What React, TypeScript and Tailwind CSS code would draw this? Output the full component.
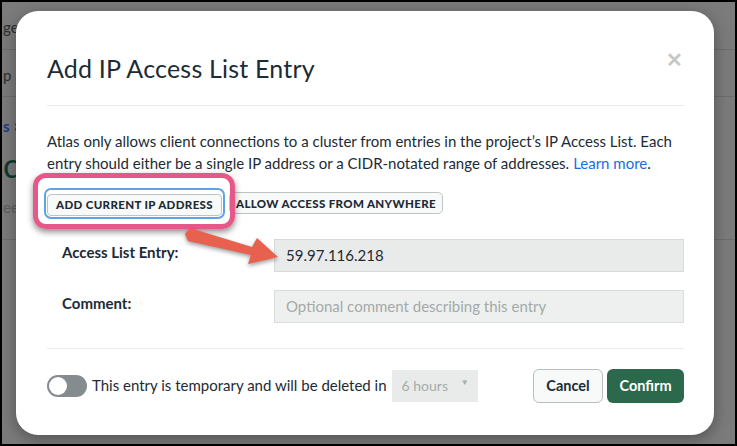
const font = { fontFamily: "Lato, 'Noto Sans', sans-serif" };

export default function App() {
  return (
    <div className="w-[737px] h-[446px] bg-black p-[2px]" style={font}>
      <div className="relative w-full h-full bg-[#7b7b7b] overflow-hidden">
        {/* page behind the overlay */}
        <div className="absolute inset-0 text-[#2c2f30]">
          <div className="h-[48px] border-b border-[#6d6d6d] pt-[14px] pl-[1px] text-[15px]">gers</div>
          <div className="h-[47px] border-b border-[#6d6d6d] pt-[14px] pl-[1px] text-[15px]">p Se</div>
          <div className="h-[143px] border-b border-[#6d6d6d] pt-[18px] pl-[1px]">
            <div className="text-[15px] font-bold text-[#1d3a8a]">s &gt;</div>
            <div className="mt-[10px] text-[34px] leading-none text-[#0d3b2c]">ce</div>
            <div className="mt-[14px] text-[15px] text-[#5d5d5d]">ee</div>
          </div>
        </div>

        {/* modal */}
        <div className="relative ml-[14px] mt-[9px] w-[698px] h-[424px] bg-white rounded-[22px] shadow-[0_4px_16px_rgba(0,0,0,0.35)] pl-[31px] pr-[30px] flex flex-col">
          <div className="flex items-start justify-between pt-[42px]">
            <h1 className="text-[25px] leading-[30px] text-[#1c2b35] tracking-[0.2px]">Add IP Access List Entry</h1>
            <span className="mt-[-4px] mr-[1px] text-[20px] font-bold text-[#c7c7c7] leading-none">✕</span>
          </div>
          <div className="mt-[22px] border-t border-[#ebebeb]" />

          <div className="mt-[24px] text-[15px] leading-[22px] text-[#1c2b35]">
            <div>Atlas only allows client connections to a cluster from entries in the project’s IP Access List. Each</div>
            <div className="flex">
              <span>entry should either be a single IP address or a CIDR-notated range of addresses.</span>
              <span className="ml-[4px] text-[#1a6ce0]">Learn more</span>
              <span>.</span>
            </div>
          </div>

          <div className="mt-[14px] flex items-center gap-[4px] ml-[-3px]">
            <div className="rounded-[7px] border-2 border-[#5fa2e6] p-[1px]">
              <button className="h-[22px] px-[8px] rounded-[4px] border border-[#bcc5c3] bg-[#f8faf9] text-[11.5px] font-black tracking-[0.35px] text-[#1c2b35]">
                ADD CURRENT IP ADDRESS
              </button>
            </div>
            <button className="h-[22px] px-[6px] rounded-[5px] border border-[#bcc5c3] bg-[#f8faf9] text-[11.5px] font-black tracking-[0.35px] text-[#1c2b35]">
              ALLOW ACCESS FROM ANYWHERE
            </button>
          </div>

          <div className="mt-[20px] flex flex-col gap-[18px]">
            <div className="flex items-center">
              <label className="w-[227px] pl-[15px] text-[15px] font-bold text-[#1c2b35] self-start pt-[2px]">Access List Entry:</label>
              <div className="flex-1 h-[33px] bg-[#e8ebea] border border-[#d6dbd9] flex items-center px-[11px] text-[15px] text-[#1c2b35]">
                59.97.116.218
              </div>
            </div>
            <div className="flex items-center">
              <label className="w-[227px] pl-[15px] text-[15px] font-bold text-[#1c2b35] self-start pt-[2px]">Comment:</label>
              <div className="flex-1 h-[33px] bg-[#eef0ef] border border-[#d9dddc] flex items-center px-[11px] text-[15px] text-[#a3aaa8]">
                Optional comment describing this entry
              </div>
            </div>
          </div>

          <div className="mt-[25px] border-t border-[#ebebeb]" />

          <div className="mt-[20px] flex items-center">
            <div className="w-[40px] h-[22px] rounded-full bg-[#848c8f] p-[2px] flex items-center">
              <div className="w-[18px] h-[18px] rounded-full bg-white" />
            </div>
            <span className="ml-[5px] text-[15px] text-[#1c2b35]">This entry is temporary and will be deleted in</span>
            <div className="ml-[5px] w-[86px] h-[32px] bg-[#e8ebe9] flex items-center justify-between pl-[10px] pr-[9px] text-[14px] text-[#a5adab]">
              <span>6 hours</span>
              <span className="text-[8px] text-[#a5adab] mt-[-8px]">▼</span>
            </div>
            <div className="ml-auto flex gap-[4px]">
              <button className="h-[34px] w-[70px] rounded-[6px] border border-[#b6bfbc] bg-[#f8faf9] text-[14.5px] font-bold text-[#1c2b35]">
                Cancel
              </button>
              <button className="h-[34px] w-[77px] rounded-[6px] bg-[#2b684c] text-[14.5px] font-bold text-white">
                Confirm
              </button>
            </div>
          </div>
        </div>

        {/* annotation: highlight box */}
        <div className="absolute left-[31px] top-[171px] w-[202px] h-[56px] rounded-[13px] border-[5px] border-[#e6578a] shadow-[0_3px_6px_rgba(0,0,0,0.45)]" />

        {/* annotation: arrow */}
        <svg className="absolute left-0 top-0" width="737" height="446" style={{ filter: "drop-shadow(0 2px 2px rgba(0,0,0,0.4))" }}>
          <polygon points="183,232 188,226 250,245 255,236 276,255 246,262 249,253 186,239" fill="#e8614e" />
        </svg>
      </div>
    </div>
  );
}
